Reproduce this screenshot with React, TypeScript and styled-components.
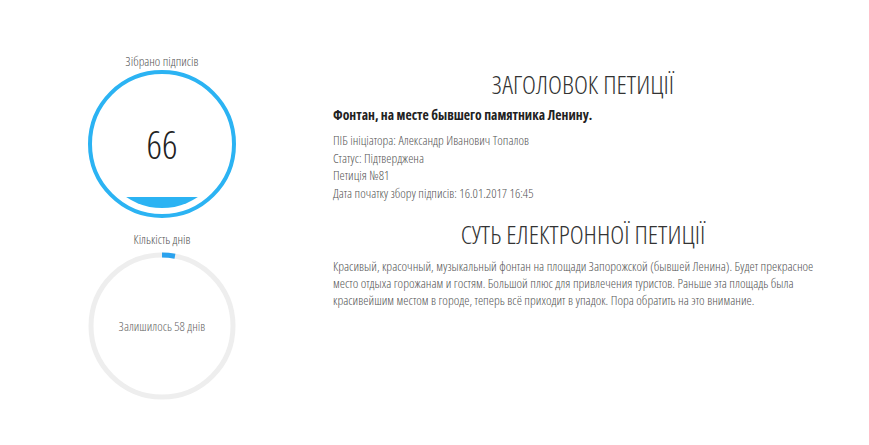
import React from "react";
import styled, { createGlobalStyle } from "styled-components";

const GlobalStyle = createGlobalStyle`
  body {
    margin: 0;
    background: #ffffff;
    font-family: "Open Sans", "Liberation Sans", sans-serif;
  }
`;

const info = [
  "ПІБ ініціатора: Александр Иванович Топалов",
  "Статус: Підтверджена",
  "Петиція №81",
  "Дата початку збору підписів: 16.01.2017 16:45",
];

const App = () => {
  return (
    <Page>
      <GlobalStyle />
      <LeftColumn>
        <GaugeLabel>Зібрано підписів</GaugeLabel>
        <Gauge>
          <svg width="150" height="150" viewBox="0 0 150 150">
            <defs>
              <clipPath id="inner">
                <circle cx="75" cy="75" r="64" />
              </clipPath>
            </defs>
            <circle cx="75" cy="75" r="72" fill="none" stroke="#2bb3f3" strokeWidth="4" />
            <rect x="0" y="128" width="150" height="30" fill="#2bb3f3" clipPath="url(#inner)" />
          </svg>
          <Count>66</Count>
        </Gauge>
        <GaugeLabel $top={12}>Кількість днів</GaugeLabel>
        <Gauge $top={4}>
          <svg width="150" height="150" viewBox="0 0 150 150">
            <circle cx="75" cy="75" r="71" fill="none" stroke="#eeeeee" strokeWidth="5" />
            <circle
              cx="75"
              cy="75"
              r="71"
              fill="none"
              stroke="#2aa2ee"
              strokeWidth="5"
              strokeDasharray="13 460"
              transform="rotate(-90 75 75)"
            />
          </svg>
          <Remaining>Залишилось 58 днів</Remaining>
        </Gauge>
      </LeftColumn>

      <Content>
        <Title>ЗАГОЛОВОК ПЕТИЦІЇ</Title>
        <Subject>Фонтан, на месте бывшего памятника Ленину.</Subject>
        <InfoList>
          {info.map((line) => (
            <InfoLine key={line}>{line}</InfoLine>
          ))}
        </InfoList>
        <Title $top={17}>СУТЬ ЕЛЕКТРОННОЇ ПЕТИЦІЇ</Title>
        <Body>
          Красивый, красочный, музыкальный фонтан на площади Запорожской (бывшей Ленина). Будет
          прекрасное место отдыха горожанам и гостям. Большой плюс для привлечения туристов.
          Раньше эта площадь была красивейшим местом в городе, теперь всё приходит в упадок. Пора
          обратить на это внимание.
        </Body>
      </Content>
    </Page>
  );
};

const Page = styled.div`
  display: flex;
  align-items: flex-start;
  padding: 53px 0 0 87px;
  width: 869px;
  height: 445px;
  box-sizing: border-box;
`;

const LeftColumn = styled.div`
  width: 150px;
  display: flex;
  flex-direction: column;
  align-items: center;
`;

const GaugeLabel = styled.div<{ $top?: number }>`
  margin-top: ${(p) => p.$top ?? 0}px;
  font-size: 13px;
  line-height: 16px;
  font-weight: 300;
  font-stretch: 75%;
  color: #555;
`;

const Gauge = styled.div<{ $top?: number }>`
  position: relative;
  margin-top: ${(p) => p.$top ?? 0}px;
  width: 150px;
  height: 150px;
  display: flex;
  align-items: center;
  justify-content: center;

  svg {
    position: absolute;
    inset: 0;
  }
`;

const Count = styled.div`
  position: relative;
  font-size: 38px;
  font-weight: 300;
  font-stretch: 75%;
  color: #222;
`;

const Remaining = styled.div`
  position: relative;
  font-size: 13px;
  font-weight: 300;
  font-stretch: 75%;
  color: #666;
`;

const Content = styled.div`
  margin: 16px 0 0 96px;
  width: 500px;
  display: flex;
  flex-direction: column;
`;

const Title = styled.h2<{ $top?: number }>`
  margin: ${(p) => p.$top ?? 0}px 0 0;
  text-align: center;
  font-size: 26.5px;
  line-height: 30px;
  font-weight: 300;
  font-stretch: 75%;
  color: #333;
`;

const Subject = styled.div`
  margin-top: 6px;
  font-size: 13.7px;
  line-height: 20px;
  font-weight: 700;
  font-stretch: 75%;
  color: #222;
`;

const InfoList = styled.div`
  margin-top: 7px;
  display: flex;
  flex-direction: column;
`;

const InfoLine = styled.div`
  font-size: 13.1px;
  line-height: 17.5px;
  font-weight: 300;
  font-stretch: 75%;
  color: #555;
`;

const Body = styled.p`
  margin: 9px 0 0;
  font-size: 13.25px;
  line-height: 17px;
  font-weight: 300;
  font-stretch: 75%;
  color: #555;
`;

export default App;
